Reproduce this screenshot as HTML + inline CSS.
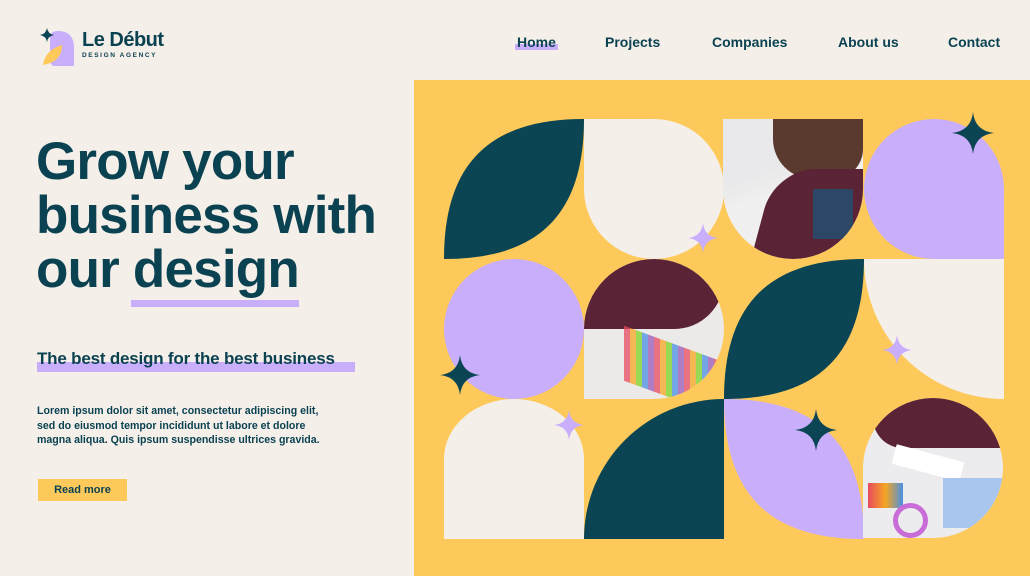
<!DOCTYPE html>
<html><head><meta charset="utf-8"><style>
*{margin:0;padding:0;box-sizing:border-box}
body{width:1030px;height:576px;overflow:hidden;background:#f4efe9;font-family:"Liberation Sans",Arial,sans-serif;color:#0b4252;position:relative}
.abs{position:absolute}
.nav a{position:absolute;top:34px;font-size:14px;font-weight:bold;color:#0b4252;text-decoration:none}
h1{position:absolute;left:36px;top:135px;font-size:53px;line-height:54px;letter-spacing:-0.8px;font-weight:bold}
.c{position:absolute;width:140px;height:140px}
.star{position:absolute}
</style></head><body>
<svg class="abs" style="left:38px;top:28px" width="40" height="40" viewBox="0 0 40 40">
<path d="M12 10 Q12 3 20 3 Q36 3 36 20 L36 38 L16 38 Q12 38 12 30 Z" fill="#c9aefc"/>
<path d="M5 37 Q7 22 24 17 Q24 34 5 37 Z" fill="#fdc95a"/>
<path d="M9 0 Q10 6 16 7 Q10 8 9 14 Q8 8 2 7 Q8 6 9 0Z" fill="#0b4452"/>
</svg>
<div class="abs" style="left:82px;top:29px;font-size:20px;font-weight:bold;letter-spacing:-0.5px">Le Début</div>
<div class="abs" style="left:82px;top:52px;font-size:6.5px;font-weight:bold;letter-spacing:1.6px">DESIGN AGENCY</div>
<div class="nav">
<div class="abs" style="left:515px;top:44px;width:43px;height:6px;background:#c9aefc"></div>
<a style="left:517px">Home</a><a style="left:605px">Projects</a><a style="left:712px">Companies</a><a style="left:838px">About us</a><a style="left:948px">Contact</a>
</div>
<div class="abs" style="left:131px;top:300px;width:168px;height:7px;background:#c9aefc"></div>
<h1>Grow your<br>business with<br>our design</h1>
<div class="abs" style="left:37px;top:362px;width:318px;height:10px;background:#c9aefc"></div>
<div class="abs" style="left:37px;top:349px;font-size:17px;font-weight:bold;letter-spacing:-0.2px">The best design for the best business</div>
<div class="abs" style="left:37px;top:404px;font-size:10.6px;line-height:14.5px;font-weight:bold;width:300px">Lorem ipsum dolor sit amet, consectetur adipiscing elit, sed do eiusmod tempor incididunt ut labore et dolore magna aliqua. Quis ipsum suspendisse ultrices gravida.</div>
<div class="abs" style="left:38px;top:479px;width:89px;height:22px;background:#fdc95a;font-size:11px;font-weight:bold;text-align:center;line-height:22px">Read more</div>

<div class="abs" style="left:414px;top:80px;width:616px;height:496px;background:#fdc95a"></div>
<svg class="abs" style="left:444px;top:119px" width="560" height="420" viewBox="0 0 560 420">
<!-- row1 -->
<path d="M0 140 C0 45 45 0 140 0 C140 95 95 140 0 140Z" fill="#0b4452"/>
<path d="M140 0 L210 0 A70 70 0 0 1 280 70 A70 70 0 0 1 140 70 Z" fill="#f4efe9"/>
<path d="M420 70 A70 70 0 0 1 560 70 L560 140 L490 140 A70 70 0 0 1 420 70Z" fill="#c9aefc"/>
<!-- row2 -->
<ellipse cx="70" cy="210" rx="70" ry="70" fill="#c9aefc"/>
<path d="M280 280 C280 185 325 140 420 140 C420 235 375 280 280 280Z" fill="#0b4452"/>
<path d="M420 140 L560 140 L560 280 A140 140 0 0 1 420 140Z" fill="#f4efe9"/>
<!-- row3 -->
<path d="M0 420 L0 340 A70 60 0 0 1 140 340 L140 420Z" fill="#f4efe9"/>
<path d="M140 420 A140 140 0 0 1 280 280 L280 420Z" fill="#0b4452"/>
<path d="M280 280 C375 280 420 325 420 420 C325 420 280 375 280 280Z" fill="#c9aefc"/>
</svg>
<div class="c" style="left:723px;top:119px;clip-path:inset(0 round 0 0 70px 70px);overflow:hidden;background:linear-gradient(160deg,#e9e8ea 0 35%,#f1f0f0 50%)">
<div class="abs" style="left:50px;top:0;width:90px;height:60px;background:#5a3a2e;border-radius:0 0 30px 40px"></div>
<div class="abs" style="left:40px;top:50px;width:100px;height:90px;background:#5b2336;border-radius:40px 0 0 0;transform:skewX(-15deg)"></div>
<div class="abs" style="left:90px;top:70px;width:40px;height:50px;background:#2d4766"></div>
</div>
<div class="c" style="left:584px;top:259px;clip-path:inset(0 round 70px 70px 70px 0);overflow:hidden;background:#eceae9">
<div class="abs" style="left:0;top:0;width:140px;height:70px;background:#5b2336;border-radius:0 0 50px 0"></div>
<div class="abs" style="left:40px;top:85px;width:100px;height:55px;background:repeating-linear-gradient(90deg,#e84a5f 0 6px,#f5a623 6px 12px,#7ed321 12px 18px,#4a90e2 18px 24px,#9b59b6 24px 30px);opacity:.75;transform:skewY(20deg)"></div>
</div>
<div class="c" style="left:863px;top:398px;clip-path:inset(0 round 70px 70px 70px 0);overflow:hidden;background:#ecebed">
<div class="abs" style="left:10px;top:0;width:130px;height:50px;background:#5b2336;border-radius:0 0 0 30px"></div>
<div class="abs" style="left:30px;top:55px;width:70px;height:20px;background:#fff;transform:rotate(15deg)"></div>
<div class="abs" style="left:80px;top:80px;width:60px;height:50px;background:#a9c6ee"></div>
<div class="abs" style="left:5px;top:85px;width:35px;height:25px;background:linear-gradient(90deg,#e84a5f,#f5a623,#4a90e2)"></div>
<div class="abs" style="left:30px;top:105px;width:35px;height:35px;border-radius:50%;border:5px solid #c86dd7"></div>
</div>
<!-- stars -->
<svg class="star" style="left:952px;top:112px" width="42" height="42" viewBox="0 0 40 40"><path d="M20 0Q22 18 40 20Q22 22 20 40Q18 22 0 20Q18 18 20 0Z" fill="#0b4452"/></svg>
<svg class="star" style="left:688px;top:223px" width="30" height="30" viewBox="0 0 40 40"><path d="M20 0Q22 18 40 20Q22 22 20 40Q18 22 0 20Q18 18 20 0Z" fill="#c9aefc"/></svg>
<svg class="star" style="left:440px;top:355px" width="40" height="40" viewBox="0 0 40 40"><path d="M20 0Q22 18 40 20Q22 22 20 40Q18 22 0 20Q18 18 20 0Z" fill="#0b4452"/></svg>
<svg class="star" style="left:882px;top:335px" width="30" height="30" viewBox="0 0 40 40"><path d="M20 0Q22 18 40 20Q22 22 20 40Q18 22 0 20Q18 18 20 0Z" fill="#c9aefc"/></svg>
<svg class="star" style="left:554px;top:410px" width="30" height="30" viewBox="0 0 40 40"><path d="M20 0Q22 18 40 20Q22 22 20 40Q18 22 0 20Q18 18 20 0Z" fill="#c9aefc"/></svg>
<svg class="star" style="left:795px;top:409px" width="42" height="42" viewBox="0 0 40 40"><path d="M20 0Q22 18 40 20Q22 22 20 40Q18 22 0 20Q18 18 20 0Z" fill="#0b4452"/></svg>
</body></html>
